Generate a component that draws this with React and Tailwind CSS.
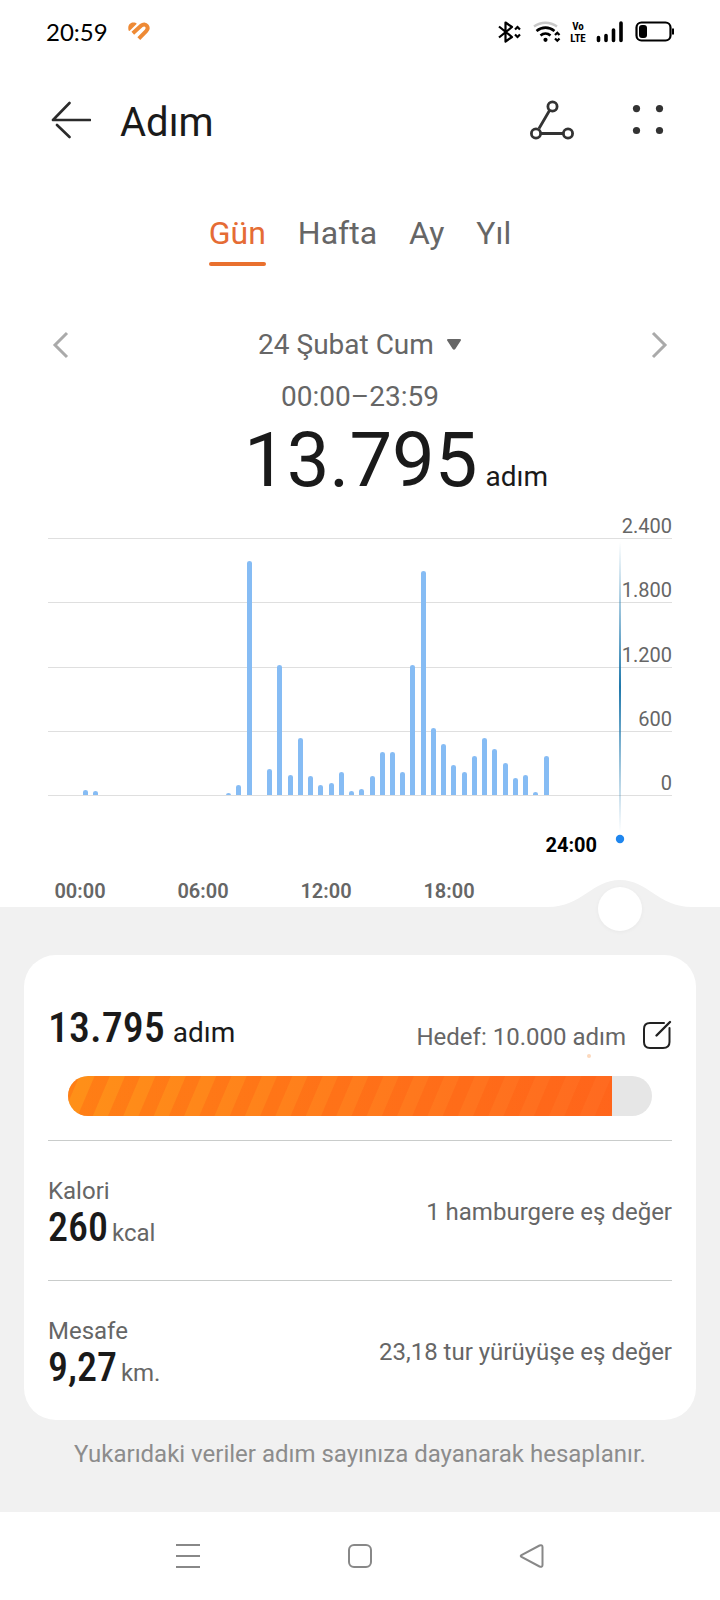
import { useState } from 'react';

const TABS = ['Gün', 'Hafta', 'Ay', 'Yıl'];

// one entry per half hour, starting at 00:00
const STEPS = [
  50, 37, 0, 0, 0, 0, 0, 0, 0, 0, 0, 0, 0, 0, 22, 96,
  2188, 0, 243, 1217, 190, 532, 181, 90, 112, 215, 40, 59, 177, 402, 402, 218,
  1217, 2092, 626, 479, 283, 215, 367, 532, 430, 302, 159, 190, 25, 367, 0, 0,
];

const GRID = [2400, 1800, 1200, 600, 0];
const HOURS = ['00:00', '06:00', '12:00', '18:00'];

const CHART_TOP = 28;
const CHART_HEIGHT = 257;
const BASE = CHART_TOP + CHART_HEIGHT;

function yFor(value) {
  return Math.round(BASE - (value / 2400) * CHART_HEIGHT);
}

function formatSteps(value) {
  return value.toLocaleString('de-DE');
}

function StatusBar() {
  return (
    <div className="h-16 pl-[46px] pr-[46px] flex items-center justify-between">
      <div className="flex items-center gap-5">
        <span className="font-[Lato,sans-serif] text-[24px] leading-8 text-black">20:59</span>
        <svg width="22" height="20" viewBox="0 0 22 20" fill="none" aria-hidden="true">
          <path d="M0.5 8C-0.5 3.500 2 0.7 5 0.6C6.8 0.5 8 0.9 8.800 1.700L2 8.600C1.300 9.300 0.700 8.900 0.5 8Z" fill="#ee8a35" />
          <path d="M4.800 11.200L13.300 3.600C15.300 1.900 17.600 2.200 18.900 3.900C20.200 5.800 19.700 7.600 18.200 9.100L10.800 16.600" stroke="#ee8a35" strokeWidth="4" strokeLinejoin="round" />
        </svg>
      </div>
      <svg width="176" height="22" viewBox="0 0 176 22" fill="none" stroke="#000" className="overflow-visible" aria-hidden="true">
        {/* bluetooth */}
        <path d="M1 5.500L14 16L7.500 20.500V1.500L14 6L1 16.500" strokeWidth="2.200" strokeLinejoin="round" />
        <path d="M17 8.500L19.500 6L22 8.500M17 13.500L19.500 16L22 13.500" strokeWidth="2.200" />
        {/* wifi */}
        <path d="M36 5.500C43 0.500 52 0.500 59 5.500" stroke="#c8c8c8" strokeWidth="2.400" />
        <path d="M38.500 10C44 5.500 51 5.500 56.500 10M42.500 14.500C45.500 12 49.500 12 52.500 14.500" strokeWidth="2.600" />
        <circle cx="47.500" cy="18.800" r="2.100" fill="#000" stroke="none" />
        <path d="M57 14L59.300 11.700L61.500 14M57 17.500L59.300 19.800L61.500 17.500" strokeWidth="2.200" />
        <g fill="#000" stroke="none" fontFamily="'Roboto Condensed', Roboto, sans-serif" fontWeight="700">
          <text x="80" y="9" fontSize="11" textAnchor="middle">Vo</text>
          <text x="80" y="21" fontSize="11" textAnchor="middle">LTE</text>
        </g>
        {/* signal */}
        <path d="M100.500 16.500V19.500M108 14.500V19.500M115.500 9V19.500M123 2V19.500" strokeWidth="3.600" strokeLinecap="round" />
        {/* battery */}
        <rect x="138.500" y="1.500" width="34" height="18" rx="5" strokeWidth="2.200" />
        <rect x="141" y="4" width="8" height="13" rx="3" fill="#000" stroke="none" />
        <path d="M175 7.500V13.500" strokeWidth="2" />
      </svg>
    </div>
  );
}

function Header() {
  return (
    <header className="h-28 px-12 flex items-center">
      <button aria-label="Geri" className="w-[46px] h-12 flex items-center justify-center">
        <svg width="40" height="38" viewBox="0 0 40 38" fill="none" stroke="#2b2b2b" strokeWidth="2.600" strokeLinecap="round" strokeLinejoin="round">
          <path d="M18.500 2L2 19H39M6 24L18.500 36" />
        </svg>
      </button>
      <h1 className="ml-[26px] pt-[6px] flex-1 text-[40px] leading-[48px] text-[#1a1a1a]">Adım</h1>
      <button aria-label="Veri paylaş" className="w-12 h-12 flex items-center justify-center">
        <svg width="44" height="40" viewBox="0 0 44 40" fill="none" stroke="#333" strokeWidth="2.800">
          <path d="M19.500 10.500L9 28.500M11 33.500H33" />
          <circle cx="22.500" cy="6.500" r="4.600" />
          <circle cx="6" cy="33.500" r="4.600" />
          <circle cx="38" cy="33.500" r="4.600" />
        </svg>
      </button>
      <button aria-label="Menü" className="ml-12 w-12 h-12 flex items-center justify-center">
        <svg width="32" height="30" viewBox="0 0 32 30" fill="#333">
          <circle cx="4.500" cy="3.600" r="3.600" />
          <circle cx="27.500" cy="3.600" r="3.600" />
          <circle cx="4.500" cy="25.500" r="3.600" />
          <circle cx="27.500" cy="25.500" r="3.600" />
        </svg>
      </button>
    </header>
  );
}

function StepChart() {
  return (
    <div className="relative">
      <svg viewBox="0 9 720 436" className="block w-full overflow-visible" fontFamily="Roboto, sans-serif" fontSize="20">
        <defs>
          <linearGradient id="cursor" x1="0" y1="0" x2="0" y2="1">
            <stop offset="0" stopColor="#2b84b8" stopOpacity="0" />
            <stop offset="0.5" stopColor="#1f78ab" />
            <stop offset="1" stopColor="#2b84b8" stopOpacity="0" />
          </linearGradient>
        </defs>
        {GRID.map(v => (
          <g key={v}>
            <rect x="48" y={yFor(v)} width="624" height="1" fill="#dfdfdf" />
            <text x="672" y={yFor(v) - 5} textAnchor="end" fill="#666">{formatSteps(v)}</text>
          </g>
        ))}
        {STEPS.map((v, i) => {
          if (!v) return null;
          const x = Math.round(82.8 + i * 10.24);
          const y = yFor(v);
          return <path key={i} d={`M${x} ${BASE}V${y + 2}q0 -2 2.500 -2t2.500 2V${BASE}Z`} fill="#86bcf4" />;
        })}
        <rect x="619" y="32" width="2" height="290" fill="url(#cursor)" />
        <circle cx="620" cy="329" r="4.200" fill="#1f86ee" />
        <text x="597" y="342" textAnchor="end" fontWeight="700" fill="#000">24:00</text>
        {HOURS.map((h, i) => (
          <text key={h} x={80 + i * 123} y="388" textAnchor="middle" fontWeight="600" fill="#666">{h}</text>
        ))}
        <path d="M0 397H548C582 397 592 370 620 370S658 397 692 397H720V445H0Z" fill="#f1f1f1" />
      </svg>
      <input
        type="range"
        min="0"
        max="48"
        defaultValue="48"
        aria-label="Saat"
        className="absolute bottom-[24px] left-[8%] right-[78px] h-11 appearance-none bg-transparent [&::-webkit-slider-thumb]:appearance-none [&::-webkit-slider-thumb]:size-11 [&::-webkit-slider-thumb]:rounded-full [&::-webkit-slider-thumb]:bg-white [&::-webkit-slider-thumb]:shadow-[0_1px_4px_rgba(0,0,0,0.04)]"
      />
    </div>
  );
}

function Metric({ label, value, unit, note }) {
  return (
    <div className="h-[140px] pt-8 border-t border-[#c9cccb] flex justify-between">
      <div>
        <p className="text-[24px] leading-9 text-[#666]">{label}</p>
        <p className="text-[24px] leading-[38px] text-[#666]">
          <span className="font-['Roboto_Condensed',Roboto,sans-serif] font-medium text-[40px] text-[#1a1a1a]">{value}</span>
          <span className="ml-1">{unit}</span>
        </p>
      </div>
      <p className="pt-[21px] text-[24px] leading-9 text-[#666]">{note}</p>
    </div>
  );
}

function GoalCard() {
  return (
    <section className="mx-6 px-6 bg-white rounded-[32px]">
      <div className="pt-12 flex items-end justify-between">
        <p className="text-[28px] leading-[50px] text-[#1a1a1a]">
          <span className="font-['Roboto_Condensed',Roboto,sans-serif] font-medium text-[42px]">13.795</span>
          <span className="ml-2">adım</span>
        </p>
        <div className="relative pb-[3px] flex items-center gap-4 text-[24px] leading-9 text-[#666]">
          <span>Hedef: 10.000 adım</span>
          <button aria-label="Hedefi düzenle" className="pb-1">
            <svg width="30" height="30" viewBox="0 0 30 30" fill="none" stroke="#222" strokeWidth="2" strokeLinecap="round">
              <path d="M22 3H8Q2 3 2 9V22Q2 28 8 28H21Q27.500 28 27.500 22V8" />
              <path d="M14.500 15.500L28 2" strokeWidth="2.400" />
            </svg>
          </button>
          <span className="absolute right-[81px] bottom-0 size-1 rounded-full bg-[#fcd9bd]" />
        </div>
      </div>
      <div role="progressbar" aria-label="Hedef" aria-valuenow="91" className="mt-[18px] mb-6 mx-5 h-10 rounded-full overflow-hidden bg-[#e6e6e6]">
        <div className="h-full w-[93.2%] bg-[repeating-linear-gradient(113deg,rgba(255,90,15,0.32)_0px,rgba(255,90,15,0.32)_10px,transparent_11px,transparent_24px,rgba(255,90,15,0.32)_25px,rgba(255,90,15,0.32)_28px),linear-gradient(90deg,#ff9018,#ff6a20)]" />
      </div>
      <Metric label="Kalori" value="260" unit="kcal" note="1 hamburgere eş değer" />
      <Metric label="Mesafe" value="9,27" unit="km." note="23,18 tur yürüyüşe eş değer" />
    </section>
  );
}

function NavBar() {
  return (
    <nav className="h-[88px] px-[102px] bg-white flex items-center justify-between">
      <button aria-label="Son uygulamalar" className="flex-1 flex justify-center">
        <svg width="26" height="26" viewBox="0 0 26 26" stroke="#888" strokeWidth="2">
          <path d="M1 2H25M1 13H25M1 24H25" />
        </svg>
      </button>
      <button aria-label="Ana ekran" className="flex-1 flex justify-center">
        <svg width="26" height="26" viewBox="0 0 26 26" fill="none" stroke="#888" strokeWidth="2">
          <rect x="2" y="2" width="22" height="22" rx="5" />
        </svg>
      </button>
      <button aria-label="Geri" className="flex-1 flex justify-center">
        <svg width="26" height="26" viewBox="0 0 26 26" fill="none" stroke="#888" strokeWidth="2">
          <path d="M2.500 12Q1 13 2.500 14L20.500 23.500Q23.500 24.500 23.500 22V4Q23.500 1.500 20.500 2.500Z" />
        </svg>
      </button>
    </nav>
  );
}

export default function App() {
  const [tab, setTab] = useState('Gün');

  return (
    <div className="min-h-screen flex flex-col bg-white font-[Roboto,sans-serif]">
      <StatusBar />
      <Header />

      <div role="tablist" className="mt-9 flex justify-center gap-8">
        {TABS.map(t => (
          <button
            key={t}
            role="tab"
            aria-selected={t === tab}
            onClick={() => setTab(t)}
            className={`text-[32px] leading-[42px] ${t === tab ? 'text-[#e56c35]' : 'text-[#666]'}`}
          >
            {t}
            <span className={`block mt-2 h-1 rounded-full ${t === tab ? 'bg-[#e9702e]' : ''}`} />
          </button>
        ))}
      </div>

      <div className="mt-[58px] px-12 flex items-center justify-between">
        <button aria-label="Önceki gün" className="w-6">
          <svg width="24" height="28" viewBox="0 0 24 28" fill="none" stroke="#aaa" strokeWidth="3">
            <path d="M19 2L7 14L19 26" />
          </svg>
        </button>
        <button className="flex items-center gap-3 text-[28px] leading-[42px] text-[#666]">
          24 Şubat Cum
          <svg width="16" height="14" viewBox="0 0 16 14" fill="#666">
            <path d="M2.500 1H13.500Q16 1 14.500 3L9.300 11Q8 12.500 6.700 11L1.500 3Q0 1 2.500 1Z" />
          </svg>
        </button>
        <button aria-label="Sonraki gün" className="w-6">
          <svg width="24" height="28" viewBox="0 0 24 28" fill="none" stroke="#aaa" strokeWidth="3">
            <path d="M5 2L17 14L5 26" />
          </svg>
        </button>
      </div>
      <p className="mt-[10px] text-center text-[28px] leading-[42px] text-[#666]">00:00–23:59</p>
      <p className="pl-[72px] text-center text-[28px] leading-[84px] text-[#1a1a1a]">
        <span className="text-[76px]">13.795</span>
        <span className="ml-2">adım</span>
      </p>

      <StepChart />

      <main className="flex-1 bg-[#f1f1f1]">
        <GoalCard />
        <p className="mt-4 text-center text-[24px] leading-9 text-[#8c8c8c]">Yukarıdaki veriler adım sayınıza dayanarak hesaplanır.</p>
      </main>
      <NavBar />
    </div>
  );
}
